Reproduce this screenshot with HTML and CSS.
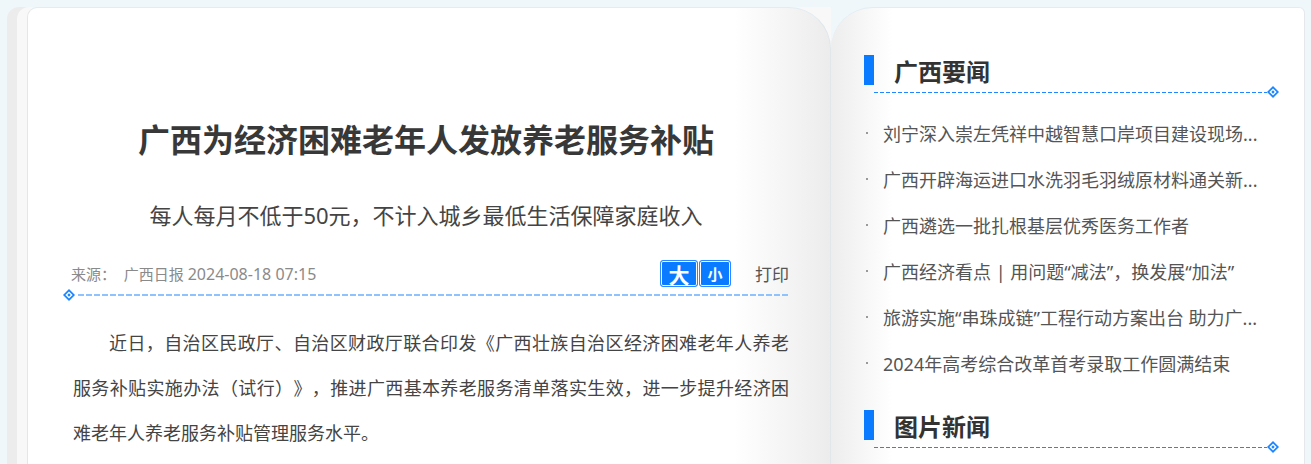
FILE: index.html
```html
<!DOCTYPE html>
<html lang="zh-CN">
<head>
    <meta charset="utf-8" />
    <title>广西为经济困难老年人发放养老服务补贴</title>
    <link rel="stylesheet" href="styles.css">
</head>
<body>
    <div class="book">
        <!--左页：正文-->
        <div class="edge1">
            <div class="edge2">
                <div class="page-left">
                    <h1 class="title">广西为经济困难老年人发放养老服务补贴</h1>
                    <h2 class="subtitle">每人每月不低于50元，不计入城乡最低生活保障家庭收入</h2>
                    <div class="meta">
                        <span class="source">来源：&nbsp;&nbsp;广西日报 <em>2024-08-18 07:15</em></span>
                        <span class="size-btn big">大</span>
                        <span class="size-btn small">小</span>
                        <span class="print">打印</span>
                    </div>
                    <div class="divider left-line">
                        <svg class="dia" width="12" height="12" viewBox="0 0 12 12"><path d="M6 0L12 6L6 12L0 6Z" fill="#1a85ff"/><path d="M6 2.4L9.6 6L6 9.6L2.4 6Z" fill="#fff"/><path d="M6 4.3L7.7 6L6 7.7L4.3 6Z" fill="#1a85ff"/></svg>
                        <i class="dash"></i>
                    </div>
                    <div class="content">
                        <p>近日，自治区民政厅、自治区财政厅联合印发《广西壮族自治区经济困难老年人养老服务补贴实施办法（试行）》，推进广西基本养老服务清单落实生效，进一步提升经济困难老年人养老服务补贴管理服务水平。</p>
                    </div>
                </div>
            </div>
        </div>

        <!--右页：侧栏-->
        <div class="page-right">
            <div class="sec-title"><i class="bar"></i>广西要闻</div>
            <div class="divider right-line">
                <i class="dash"></i>
                <svg class="dia" width="12" height="12" viewBox="0 0 12 12"><path d="M6 0L12 6L6 12L0 6Z" fill="#1a85ff"/><path d="M6 2.4L9.6 6L6 9.6L2.4 6Z" fill="#fff"/><path d="M6 4.3L7.7 6L6 7.7L4.3 6Z" fill="#1a85ff"/></svg>
            </div>
            <ul class="news">
                <li><i class="dot"></i>刘宁深入崇左凭祥中越智慧口岸项目建设现场...</li>
                <li><i class="dot"></i>广西开辟海运进口水洗羽毛羽绒原材料通关新...</li>
                <li><i class="dot"></i>广西遴选一批扎根基层优秀医务工作者</li>
                <li><i class="dot"></i>广西经济看点 | 用问题“减法”，换发展“加法”</li>
                <li><i class="dot"></i>旅游实施“串珠成链”工程行动方案出台 助力广...</li>
                <li><i class="dot"></i>2024年高考综合改革首考录取工作圆满结束</li>
            </ul>
            <div class="sec-title second"><i class="bar"></i>图片新闻</div>
            <div class="divider right-line">
                <i class="dash"></i>
                <svg class="dia" width="12" height="12" viewBox="0 0 12 12"><path d="M6 0L12 6L6 12L0 6Z" fill="#1a85ff"/><path d="M6 2.4L9.6 6L6 9.6L2.4 6Z" fill="#fff"/><path d="M6 4.3L7.7 6L6 7.7L4.3 6Z" fill="#1a85ff"/></svg>
            </div>
        </div>
    </div>
</body>
</html>
```

FILE: styles.css
```css
html,
body,
h1,
h2,
p,
ul,
li
{
    margin: 0;
    padding: 0;
}

ul
{
    list-style-type: none;
}

html,
body
{
    height: 464px;
    overflow: hidden;
}

body
{
    background: #eff7fb;
    font-family: "Noto Sans", "Noto Sans CJK SC", sans-serif;
    color: #444;
}

.book
{
    display: flex;
    height: 457px;
    padding-top: 7px;
}

/* 左页 */
.edge1
{
    margin-left: 7px;
    padding-left: 10px;
    background: #ececec;
    border-top-left-radius: 12px;
}

.edge2
{
    height: 100%;
    padding-left: 10px;
    background: #f8f8f8;
    border-top-left-radius: 12px;
}

.page-left
{
    box-sizing: border-box;
    width: 804px;
    height: 100%;
    padding: 112px 41px 0 41px;
    background: linear-gradient(to right, #fff 0, #fff 88%, #ececec 100%);
    border-top: 1px solid #e2ecf2;
    border-left: 1px solid #e6e6e6;
    border-right: 1px solid #e0e6ea;
    border-radius: 10px 42px 0 0;
}

.title
{
    text-align: center;
    font-size: 32px;
    line-height: 40px;
    font-weight: 700;
    color: #383838;
    margin-left: -6px;
}

.subtitle
{
    margin-top: 40px;
    text-align: center;
    font-size: 22px;
    line-height: 30px;
    font-weight: 400;
    color: #444;
    margin-left: -6px;
}

.meta
{
    display: flex;
    align-items: center;
    height: 27px;
    margin-top: 30px;
    padding-left: 2px;
}

    .meta .source
    {
        flex: 1;
        font-size: 15px;
        color: #8a8a8a;
    }

        .meta .source em
        {
            font-style: normal;
            font-size: 16px;
        }

    .meta .size-btn
    {
        display: flex;
        align-items: center;
        justify-content: center;
        box-sizing: border-box;
        height: 27px;
        color: #fff;
        font-weight: 700;
        background: #0a7bff;
        border: 1px solid #2a8bff;
        box-shadow: inset 0 0 0 1px #fff;
        border-radius: 3px;
    }

    .meta .big
    {
        width: 38px;
        font-size: 21px;
    }

    .meta .small
    {
        width: 32px;
        margin-left: 1px;
        font-size: 15px;
    }

    .meta .print
    {
        margin-left: 24px;
        font-size: 17px;
        color: #555;
    }

.divider
{
    display: flex;
    align-items: center;
    height: 12px;
}

    .divider .dash
    {
        flex: 1;
    }

.left-line
{
    margin: 2px 0 0 -6px;
}

    .left-line .dash
    {
        height: 2px;
        margin-left: 3px;
        background: repeating-linear-gradient(to right, #8ec3ff 0, #8ec3ff 6px, transparent 6px, transparent 8px);
    }

.content
{
    margin: 20px 0 0 4px;
}

    .content p
    {
        font-size: 18px;
        line-height: 45px;
        text-indent: 2em;
        text-align: justify;
        text-spacing-trim: space-all;
        color: #444;
    }

/* 右页 */
.page-right
{
    box-sizing: border-box;
    width: 474px;
    height: 100%;
    padding: 47px 25px 0 33px;
    background: linear-gradient(to right, #ededed 0, #fff 13%);
    border-top: 1px solid #e2ecf2;
    border-right: 1px solid #e4e8ec;
    border-radius: 42px 6px 0 0;
}

.sec-title
{
    display: flex;
    align-items: center;
    height: 30px;
    font-size: 24px;
    font-weight: 700;
    color: #333;
}

    .sec-title .bar
    {
        width: 10px;
        height: 30px;
        margin-right: 20px;
        background: #0a7bff;
    }

.sec-title.second
{
    margin-top: 24px;
}

.right-line
{
    margin: 1px 0 0 10px;
}

    .right-line .dash
    {
        height: 1px;
        background: repeating-linear-gradient(to right, #1f87ff 0, #1f87ff 4px, transparent 4px, transparent 6px);
    }

.news
{
    margin-top: 12px;
}

    .news li
    {
        display: flex;
        align-items: center;
        height: 46px;
        font-size: 18px;
        color: #555;
        white-space: nowrap;
    }

        .news li .dot
        {
            width: 2px;
            height: 2px;
            margin: 0 15px 0 2px;
            background: #999;
        }
```
